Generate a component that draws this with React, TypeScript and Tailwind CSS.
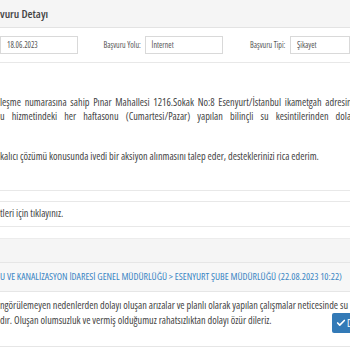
import { Check } from 'lucide-react';

function Field({ value, width }: { value: string; width: string }) {
  return (
    <div className={`h-[18px] ${width} shrink-0 border border-[#d9d9d9] bg-white pl-[6px] text-[8px] leading-[16px] text-[#555]`}>
      {value}
    </div>
  );
}

export default function App() {
  return (
    <div className="h-[350px] w-[350px] overflow-hidden bg-white font-['Open_Sans',sans-serif] font-stretch-condensed text-[#333]">
      {/* panel heading */}
      <div className="flex h-[28px] items-center border-b border-[#e3e3e3] bg-[#f5f5f5] text-[11.5px] font-semibold text-[#444]">
        vuru Detayı
      </div>

      {/* summary fields */}
      <div className="flex h-[35px] items-center whitespace-nowrap border-b border-[#e8e8e8] text-[8px] text-[#555]">
        <Field value="18.06.2023" width="w-[78px]" />
        <span className="w-[82px] text-right font-medium">Başvuru Yolu:</span>
        <span className="w-[5px]" />
        <Field value="İnternet" width="w-[78px]" />
        <span className="w-[82px] text-right font-medium">Başvuru Tipi:</span>
        <span className="w-[6px]" />
        <Field value="Şikayet" width="w-[60px]" />
      </div>

      {/* complaint text */}
      <div className="whitespace-nowrap pt-[32px] text-[10.25px] leading-[14px] text-[#444]">
        <div className="[word-spacing:1.8px]">leşme numarasına sahip Pınar Mahallesi 1216.Sokak No:8 Esenyurt/İstanbul ikametgah adresinde</div>
        <div className="[word-spacing:5.2px]">u hizmetindeki her haftasonu (Cumartesi/Pazar) yapılan bilinçli su kesintilerinden dolayı çok büyük</div>
        <div className="h-[26px]" />
        <div>kalıcı çözümü konusunda ivedi bir aksiyon alınmasını talep eder, desteklerinizi rica ederim.</div>
      </div>

      <div className="mt-[27px] h-[12px] border-y border-[#e8e8e8]" />
      <div className="flex h-[24px] items-center text-[10.25px] text-[#444]">tleri için tıklayınız.</div>
      <div className="h-[12px] border-t border-[#e8e8e8]" />

      {/* answer panel */}
      <div className="h-[24px] border-t border-[#ececec] bg-[#f5f5f5]" />
      <div className="flex h-[30px] items-center whitespace-nowrap border-y border-[#e6e6e6] bg-[#f7f7f7] text-[9.8px] text-[#3b86c4]">
        U VE KANALİZASYON İDARESİ GENEL MÜDÜRLÜĞÜ &gt; ESENYURT ŞUBE MÜDÜRLÜĞÜ (22.08.2023 10:22)
      </div>
      <div className="relative h-[55px] border-b border-[#e6e6e6] pt-[6px] text-[10.25px] leading-[15px] text-[#444]">
        <div className="whitespace-nowrap">ngörülemeyen nedenlerden dolayı oluşan arızalar ve planlı olarak yapılan çalışmalar neticesinde su</div>
        <div className="whitespace-nowrap">dır. Oluşan olumsuzluk ve vermiş olduğumuz rahatsızlıktan dolayı özür dileriz.</div>
        <div className="absolute left-[332px] top-[21px] flex h-[20px] w-[40px] items-center gap-[1px] rounded-[2px] bg-[#337ab7] pl-[4px] text-[10px] text-white">
          <Check size={10} strokeWidth={4} />
          <span>Detay</span>
        </div>
      </div>
    </div>
  );
}
